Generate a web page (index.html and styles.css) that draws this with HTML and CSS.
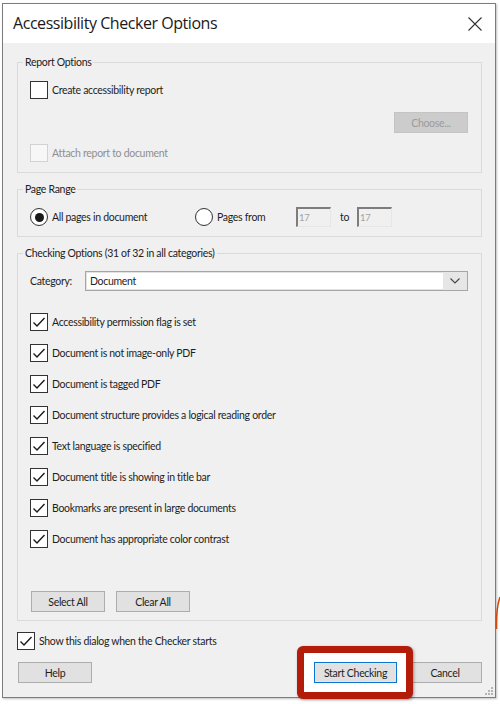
FILE: index.html
```html
<!DOCTYPE html>
<html lang="en">
<head>
<meta charset="utf-8">
<title>Accessibility Checker Options</title>
<link rel="stylesheet" href="styles.css">
</head>
<body>
<div class="window">
  <div class="titlebar">
    <span class="title">Accessibility Checker Options</span>
    <svg class="close" width="14" height="14" viewBox="0 0 14 14"><path d="M0.5 0.5 L13.5 13.5 M13.5 0.5 L0.5 13.5" stroke="#333" stroke-width="1.1" fill="none"/></svg>
  </div>
  <div class="content">
    <fieldset class="group g-report">
      <legend>Report Options</legend>
      <div class="check-row"><span class="box"></span><span>Create accessibility report</span></div>
      <div class="choose-row"><span class="btn btn-disabled">Choose...</span></div>
      <div class="check-row row-attach disabled"><span class="box"></span><span>Attach report to document</span></div>
    </fieldset>

    <fieldset class="group g-range">
      <legend>Page Range</legend>
      <div class="range-row">
        <div class="radio-item all"><span class="radio on"></span><span>All pages in document</span></div>
        <div class="radio-item from"><span class="radio"></span><span>Pages from</span></div>
        <span class="num">17</span>
        <span class="to">to</span>
        <span class="num">17</span>
      </div>
    </fieldset>

    <fieldset class="group g-check">
      <legend>Checking Options (31 of 32 in all categories)</legend>
      <div class="cat-row">
        <span class="cat-label">Category:</span>
        <div class="select">
          <span class="select-value">Document</span>
          <span class="select-arrow"><svg width="10" height="6" viewBox="0 0 10 6"><path d="M0.5 0.5 L5 5 L9.5 0.5" stroke="#444" stroke-width="1.1" fill="none"/></svg></span>
        </div>
      </div>
      <div class="check-list">
        <div class="check-row"><span class="box checked"><svg width="16" height="16" viewBox="0 0 16 16"><path d="M2.5 8.5 L6 12 L13.5 4" stroke="#1a1a1a" stroke-width="1.4" fill="none"/></svg></span><span>Accessibility permission flag is set</span></div>
        <div class="check-row"><span class="box checked"><svg width="16" height="16" viewBox="0 0 16 16"><path d="M2.5 8.5 L6 12 L13.5 4" stroke="#1a1a1a" stroke-width="1.4" fill="none"/></svg></span><span>Document is not image-only PDF</span></div>
        <div class="check-row"><span class="box checked"><svg width="16" height="16" viewBox="0 0 16 16"><path d="M2.5 8.5 L6 12 L13.5 4" stroke="#1a1a1a" stroke-width="1.4" fill="none"/></svg></span><span>Document is tagged PDF</span></div>
        <div class="check-row"><span class="box checked"><svg width="16" height="16" viewBox="0 0 16 16"><path d="M2.5 8.5 L6 12 L13.5 4" stroke="#1a1a1a" stroke-width="1.4" fill="none"/></svg></span><span>Document structure provides a logical reading order</span></div>
        <div class="check-row"><span class="box checked"><svg width="16" height="16" viewBox="0 0 16 16"><path d="M2.5 8.5 L6 12 L13.5 4" stroke="#1a1a1a" stroke-width="1.4" fill="none"/></svg></span><span>Text language is specified</span></div>
        <div class="check-row"><span class="box checked"><svg width="16" height="16" viewBox="0 0 16 16"><path d="M2.5 8.5 L6 12 L13.5 4" stroke="#1a1a1a" stroke-width="1.4" fill="none"/></svg></span><span>Document title is showing in title bar</span></div>
        <div class="check-row"><span class="box checked"><svg width="16" height="16" viewBox="0 0 16 16"><path d="M2.5 8.5 L6 12 L13.5 4" stroke="#1a1a1a" stroke-width="1.4" fill="none"/></svg></span><span>Bookmarks are present in large documents</span></div>
        <div class="check-row"><span class="box checked"><svg width="16" height="16" viewBox="0 0 16 16"><path d="M2.5 8.5 L6 12 L13.5 4" stroke="#1a1a1a" stroke-width="1.4" fill="none"/></svg></span><span>Document has appropriate color contrast</span></div>
      </div>
      <div class="sel-buttons">
        <span class="btn">Select All</span>
        <span class="btn">Clear All</span>
      </div>
    </fieldset>

    <div class="check-row show-row"><span class="box checked"><svg width="16" height="16" viewBox="0 0 16 16"><path d="M2.5 8.5 L6 12 L13.5 4" stroke="#1a1a1a" stroke-width="1.4" fill="none"/></svg></span><span>Show this dialog when the Checker starts</span></div>

    <div class="footer">
      <span class="btn help">Help</span>
      <div class="highlight"><span class="btn btn-primary">Start Checking</span></div>
      <span class="btn cancel">Cancel</span>
    </div>
  </div>
  <svg class="grip" width="8" height="8" viewBox="0 0 8 8"><g fill="#b4b4b4"><rect x="6" y="0" width="2" height="2"/><rect x="3" y="3" width="2" height="2"/><rect x="6" y="3" width="2" height="2"/><rect x="0" y="6" width="2" height="2"/><rect x="3" y="6" width="2" height="2"/><rect x="6" y="6" width="2" height="2"/></g></svg>
</div>
<svg class="edge-curve" width="6" height="34" viewBox="0 0 6 34"><path d="M6 1 Q2 12 2.5 33" stroke="#d2480f" stroke-width="1.6" fill="none"/></svg>
</body>
</html>
```
FILE: styles.css
```css
* { box-sizing: border-box; }

body {
  margin: 0;
  width: 500px;
  height: 704px;
  overflow: hidden;
  background: #ffffff;
  position: relative;
  font-family: Lato, "Liberation Sans", sans-serif;
  font-size: 10.5px;
  letter-spacing: -0.3px;
  color: #1e1e1e;
}

.window {
  position: relative;
  margin: 3px 0 0 2px;
  width: 494px;
  height: 695px;
  border: 1px solid #7c7c7c;
  background: #f0f0f0;
  box-shadow: 1px 1px 2px rgba(0, 0, 0, 0.25);
}

.titlebar {
  height: 39px;
  background: #ffffff;
  display: flex;
  align-items: center;
  justify-content: space-between;
  padding: 0 13px 0 10px;
}

.title {
  font-family: "Open Sans", "Noto Sans", sans-serif;
  font-size: 16px;
  letter-spacing: -0.45px;
  line-height: 39px;
  color: #1a1a1a;
}

.close { display: block; margin-top: 1px; }

.content {
  padding: 0 13px 0 14px;
}

.group {
  margin: 0;
  min-width: 0;
  border: 1px solid #dadada;
  padding: 0 13px 0 12px;
}

.group legend {
  margin-left: -7px;
  padding: 0 2px;
  line-height: 14px;
  font-size: 10.5px;
  color: #222;
}

.g-report { margin-top: 12px; padding-top: 12px; padding-bottom: 10px; }
.g-range { margin-top: 9px; padding-top: 11px; padding-bottom: 9px; }
.g-check { margin-top: 9px; padding-top: 11px; padding-bottom: 8px; }

.check-row {
  display: flex;
  align-items: center;
  height: 18px;
  white-space: nowrap;
}

.check-row > span:last-child { margin-top: -1px; }

.box {
  width: 18px;
  height: 18px;
  flex: none;
  border: 1px solid #333;
  background: #fff;
  margin-right: 4px;
  display: flex;
  align-items: center;
  justify-content: center;
}

.box svg { display: block; }

.disabled { color: #8f8f8f; }
.disabled .box { border-color: #d2d2d2; background: #f7f7f7; }

.choose-row {
  margin-top: 13px;
  display: flex;
  justify-content: flex-end;
}

.row-attach { margin-top: 11px; }

.btn {
  display: flex;
  align-items: center;
  justify-content: center;
  width: 74px;
  height: 21px;
  background: #e1e1e1;
  border: 1px solid #adadad;
  color: #1e1e1e;
  white-space: nowrap;
}

.btn-disabled {
  background: #cccccc;
  border-color: #c4c4c4;
  color: #9b9b9b;
}

.range-row {
  display: flex;
  align-items: center;
  height: 20px;
}

.radio-item {
  display: flex;
  align-items: center;
  white-space: nowrap;
}

.radio-item.all { width: 165px; }
.radio-item.from { width: 101px; }

.radio {
  width: 18px;
  height: 18px;
  flex: none;
  border: 1px solid #333;
  border-radius: 50%;
  background: #fff;
  margin-right: 4px;
  display: flex;
  align-items: center;
  justify-content: center;
}

.radio.on::after {
  content: "";
  width: 9px;
  height: 9px;
  border-radius: 50%;
  background: #1a1a1a;
}

.num {
  width: 35px;
  height: 20px;
  flex: none;
  border-top: 2px solid #7d7d7d;
  border-left: 2px solid #7d7d7d;
  border-right: 1px solid #e6e6e6;
  border-bottom: 1px solid #e6e6e6;
  background: #f0f0f0;
  color: #a3a3a3;
  font-size: 9.5px;
  line-height: 17px;
  padding-left: 1px;
}

.to {
  width: 26px;
  padding-left: 9px;
  flex: none;
}

.cat-row {
  display: flex;
  align-items: center;
  height: 20px;
}

.cat-label { width: 55px; flex: none; }

.select {
  flex: 1;
  height: 20px;
  display: flex;
  border: 1px solid #a6a6a6;
  background: #fff;
  box-shadow: inset 0 0 0 1px #e2e2e2;
}

.select-value {
  flex: 1;
  padding-left: 4px;
  line-height: 18px;
}

.select-arrow {
  width: 24px;
  background: #e6e6e6;
  display: flex;
  align-items: center;
  justify-content: center;
}

.select-arrow svg { display: block; }

.check-list {
  margin-top: 22px;
  display: flex;
  flex-direction: column;
  gap: 13px;
}

.sel-buttons {
  margin-top: 43px;
  display: flex;
  gap: 11px;
  padding-left: 1px;
}

.show-row { margin-top: 11px; }

.footer {
  margin-top: 12px;
  display: flex;
  align-items: center;
  height: 21px;
}

.help { margin-left: 1px; }

.highlight {
  position: relative;
  z-index: 2;
  margin: -16px -16px -16px auto;
  padding: 9px 9px 9px 10px;
  border: 7px solid #b41c0a;
  border-radius: 6px;
  background: #ffffff;
  box-shadow: 1px 1px 3px rgba(0, 0, 0, 0.35);
}

.btn-primary {
  width: 83px;
  border: 1px solid #0a74d0;
  box-shadow: inset 0 0 0 1px #d8e8f6;
}

.cancel { margin-left: 11px; }

.grip {
  position: absolute;
  right: 2px;
  bottom: 2px;
}

.edge-curve {
  position: absolute;
  left: 494px;
  top: 596px;
}
```
